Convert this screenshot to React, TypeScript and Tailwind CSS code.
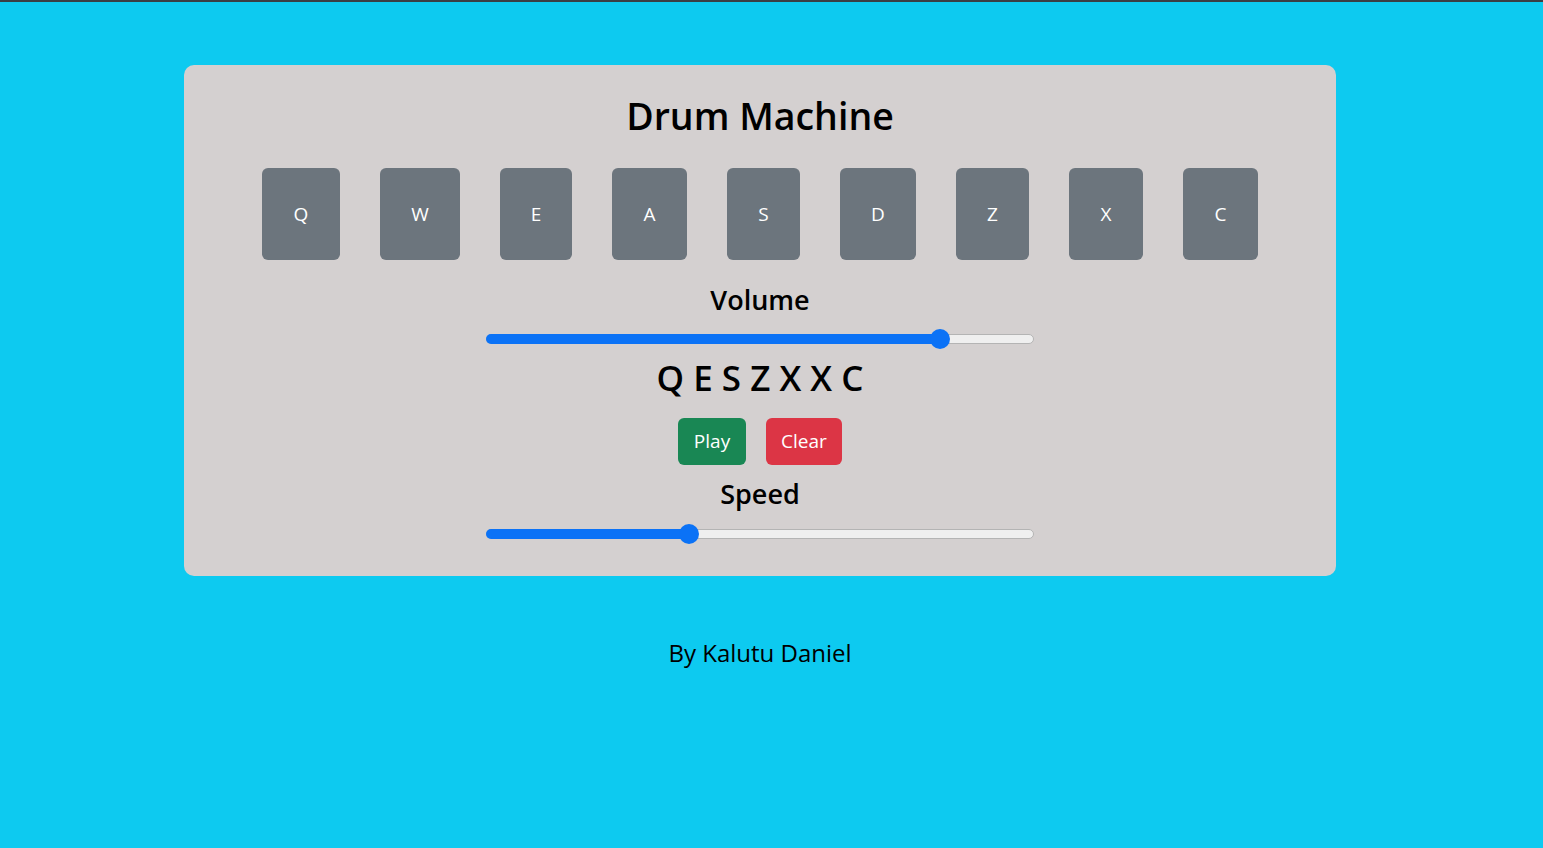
const pads = [
  { key: "Q", w: "w-[78px]" },
  { key: "W", w: "w-[80px]" },
  { key: "E", w: "w-[72px]" },
  { key: "A", w: "w-[75px]" },
  { key: "S", w: "w-[73px]" },
  { key: "D", w: "w-[76px]" },
  { key: "Z", w: "w-[73px]" },
  { key: "X", w: "w-[74px]" },
  { key: "C", w: "w-[75px]" },
];

function Slider({ value }: { value: number }) {
  // value in 0..1, thumb travels inside the track
  return (
    <div className="relative h-[20px] w-[548px]">
      <div className="absolute left-0 right-0 top-[5px] h-[10px] rounded-full border border-[#b4b4b4] bg-[#efefef]" />
      <div
        className="absolute left-0 top-[5px] h-[10px] rounded-full bg-[#0b72f6]"
        style={{ width: `${10 + value * 528}px` }}
      />
      <div
        className="absolute top-0 h-[20px] w-[20px] rounded-full bg-[#0b72f6]"
        style={{ left: `${value * 528}px` }}
      />
    </div>
  );
}

export default function App() {
  return (
    <div
      className="min-h-[848px] border-t-2 border-[#3a3f45] bg-[#0dcaf0] text-black"
      style={{ fontFamily: '"Open Sans", "Noto Sans", sans-serif' }}
    >
      <div className="w-[1520px]">
        <div className="mx-auto mt-[63px] flex w-[1152px] flex-col items-center rounded-[10px] bg-[#d4d0d0] pb-[32px] pt-[26px]">
          <h1 className="text-[37.5px] font-semibold leading-[50px]">Drum Machine</h1>

          <div className="mt-[27px] flex gap-[40px]">
            {pads.map((p) => (
              <button
                key={p.key}
                className={`flex h-[92px] items-center justify-center rounded-[6px] bg-[#6c757d] text-[19px] text-white ${p.w}`}
              >
                {p.key}
              </button>
            ))}
          </div>

          <h3 className="mt-[20px] text-[27px] font-semibold leading-[40px]">Volume</h3>
          <div className="mt-[9px]">
            <Slider value={0.84} />
          </div>

          <h2 className="mt-[7px] text-[35px] font-semibold leading-[44px]">Q E S Z X X C</h2>

          <div className="mt-[18px] flex gap-[20px]">
            <button className="h-[47px] w-[68px] rounded-[6px] bg-[#198754] text-[19px] text-white">
              Play
            </button>
            <button className="h-[47px] w-[76px] rounded-[6px] bg-[#dc3545] text-[19px] text-white">
              Clear
            </button>
          </div>

          <h3 className="mt-[9px] text-[27px] font-semibold leading-[40px]">Speed</h3>
          <div className="mt-[10px]">
            <Slider value={0.365} />
          </div>
        </div>

        <p className="mt-[59px] text-center text-[24px] font-medium">By Kalutu Daniel</p>
      </div>
    </div>
  );
}
